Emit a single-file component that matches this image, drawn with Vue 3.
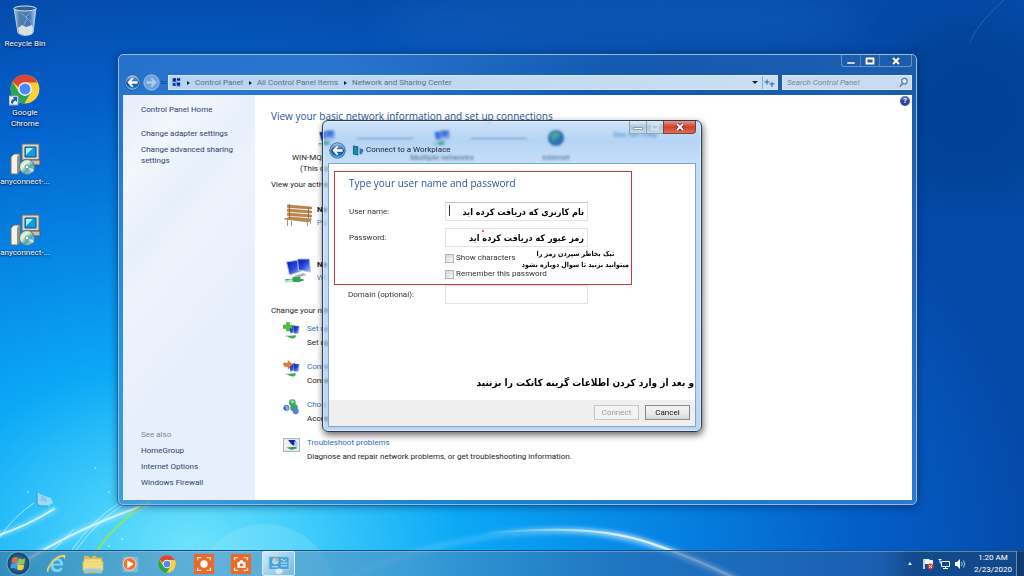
<script setup>
import { ref } from 'vue'

const userName = ref('نام کاربری که دریافت کرده اید')
const password = ref('رمز عبور که دریافت کرده اید')
const domain = ref('')
const showCharacters = ref(false)
const remember = ref(false)

const crumbs = ['Control Panel', 'All Control Panel Items', 'Network and Sharing Center']
const seeAlso = ['HomeGroup', 'Internet Options', 'Windows Firewall']
const tasks = [
  { icon: 'add', title: 'Set up', text: 'Set up' },
  { icon: 'go', title: 'Conne', text: 'Conne' },
  { icon: 'group', title: 'Choo', text: 'Acces' },
  { icon: 'fix', title: 'Troubleshoot problems', text: 'Diagnose and repair network problems, or get troubleshooting information.' },
]
</script>

<template>
  <div class="desktop">
    <svg class="wallpaper" viewBox="0 0 1024 576" preserveAspectRatio="none" aria-hidden="true">
      <defs>
        <radialGradient id="sky" gradientUnits="userSpaceOnUse" cx="0" cy="0" r="1" gradientTransform="translate(190 545) scale(850 570)">
          <stop offset="0" stop-color="#6fe2fc" />
          <stop offset=".14" stop-color="#40ccfb" />
          <stop offset=".32" stop-color="#0ba8f6" />
          <stop offset=".55" stop-color="#0584e4" />
          <stop offset=".78" stop-color="#045fca" />
          <stop offset="1" stop-color="#0549a8" />
        </radialGradient>
        <linearGradient id="fade" gradientUnits="userSpaceOnUse" x1="480" y1="0" x2="620" y2="0"><stop stop-color="#e2f4ff" stop-opacity="0" /><stop offset="1" stop-color="#e8f6ff" /></linearGradient>
        <filter id="soft"><feGaussianBlur stdDeviation="2.2" /></filter>
        <filter id="haze"><feGaussianBlur stdDeviation="18" /></filter>
      </defs>
      <rect width="1024" height="576" fill="url(#sky)" />
      <ellipse cx="620" cy="20" rx="240" ry="36" fill="#2477d0" opacity=".25" filter="url(#haze)" />
      <ellipse cx="970" cy="110" rx="90" ry="90" fill="#063c86" opacity=".5" filter="url(#haze)" />
      <circle cx="265" cy="594" r="70" fill="#b9f2ff" opacity=".18" />
      <path d="M350 576Q470 525 590 533Q650 540 740 582" fill="none" stroke="#7cd4ff" stroke-width="6" opacity=".3" filter="url(#soft)" />
      <path d="M480 534Q590 522 650 543Q700 560 738 580" fill="none" stroke="url(#fade)" stroke-width="5" opacity=".7" filter="url(#soft)" />
      <path d="M480 534Q590 522 650 543Q700 560 738 580" fill="none" stroke="url(#fade)" stroke-width="2" opacity=".9" />
      <g fill="none" stroke="#effcff" stroke-linecap="round">
        <path d="M-4 536Q25 527 54 509" stroke-width="5" opacity=".4" filter="url(#soft)" />
        <path d="M-4 536Q25 527 54 509M30 558Q80 527 148 504" stroke-width="2" opacity=".75" />
        <path d="M30 558Q80 527 148 504" stroke-width="6" opacity=".35" filter="url(#soft)" />
        <path d="M0 537Q14 516 34 503M72 550Q92 520 118 504M76 550Q98 520 124 504M52 551Q64 540 74 529" stroke-width="1" opacity=".6" />
        <path d="M970 42Q980 20 1004 0" stroke-width="1" opacity=".15" />
      </g>
      <path d="M95 554Q112 526 147 503" fill="none" stroke="#8be66a" stroke-width="2" />
      <g fill="#fff" opacity=".5"><circle cx="95" cy="468" r="1" /><circle cx="109" cy="492" r="1" /><circle cx="109" cy="546" r="1" /><circle cx="28" cy="492" r="1" /><circle cx="122" cy="539" r="1" /></g>
      <g transform="translate(36 492)">
        <path d="M1 0V11Q1 14 5 14H12L17 11L15 6L6 3z" fill="#d7f0fb" opacity=".6" />
        <path d="M5 4l5 1 1 5-6-1z" fill="#8ac6e8" /><path d="M1 0V11Q1 14 5 14H12" fill="none" stroke="#4790c4" />
      </g>
    </svg>

    <svg class="defs" width="0" height="0" aria-hidden="true">
      <defs>
        <linearGradient id="orb" x2="0" y2="1"><stop stop-color="#9fc3e8" /><stop offset=".45" stop-color="#2b64b4" /><stop offset=".5" stop-color="#103c8c" /><stop offset="1" stop-color="#2fa3e4" /></linearGradient>
        <linearGradient id="screen" x2="1" y2="1"><stop stop-color="#0716a8" /><stop offset=".5" stop-color="#2747d9" /><stop offset="1" stop-color="#a8c8f4" /></linearGradient>
        <linearGradient id="bin" x2="1"><stop stop-color="#a8c7df" /><stop offset=".25" stop-color="#547fac" /><stop offset=".7" stop-color="#4376b2" /><stop offset="1" stop-color="#b4d4ec" /></linearGradient>
        <radialGradient id="start"><stop stop-color="#6cc6ee" /><stop offset=".6" stop-color="#205d93" /><stop offset="1" stop-color="#174166" /></radialGradient>
        <linearGradient id="disc" x2="1" y2="1"><stop stop-color="#6ddbe8" /><stop offset=".35" stop-color="#edf5cc" /><stop offset=".6" stop-color="#4aa9c0" /><stop offset="1" stop-color="#dde8ea" /></linearGradient>
        <symbol id="chrome" viewBox="0 0 48 48">
          <circle cx="24" cy="24" r="23" fill="#fdd03b" />
          <path d="M4 12.500A23 23 0 0 0 23 47L33.500 29.500L24 24L14.500 29.500z" fill="#2fa255" />
          <path d="M4 12.500A23 23 0 0 1 44 13.500H24Q17 14 14 21z" fill="#dc4437" />
          <circle cx="24" cy="24" r="11" fill="#f5f8fc" /><circle cx="24" cy="24" r="8.800" fill="#4a8af4" />
        </symbol>
        <symbol id="back" viewBox="0 0 20 20">
          <circle cx="10" cy="10" r="9" fill="url(#orb)" stroke="#23508d" /><circle cx="10" cy="10" r="8" fill="none" stroke="#b6d5ef" stroke-opacity=".7" />
          <path d="M4 10l5.500-5.500 1.500 1.500-2.500 2.500H16v3H8.500L11 14l-1.500 1.500z" fill="#fff" />
        </symbol>
        <symbol id="setup" viewBox="0 0 32 32">
          <path d="M13 1H30V17H13z" fill="#d9d5ca" stroke="#6c6b68" /><path d="M16 4H27V14H16z" fill="#1399dc" stroke="#07528d" /><path d="M17 5h7l-7 7z" fill="#9ef1f8" />
          <path d="M15 17H31V22H13z" fill="#c5c1b4" stroke="#58564f" />
          <path d="M2 14L5 11H11L9 14V31H2z" fill="#f5f2e8" stroke="#727064" /><path d="M8 14L11 11V28L8 31z" fill="#94918a" />
          <circle cx="18" cy="24" r="7.500" fill="url(#disc)" stroke="#57777d" /><path d="M17 17l2 7 6 3-1 2-6-4-6-1 1-3 5 2z" fill="#f6f4cf" opacity=".8" /><circle cx="18" cy="24" r="2" fill="#eefbfe" stroke="#638896" />
        </symbol>
        <symbol id="pcs" viewBox="0 0 28 26">
          <path d="M2 4L14 2L17 13L5 17z" fill="url(#screen)" stroke="#aebde5" /><path d="M13 1L25 1L26 14L14 12z" fill="url(#screen)" stroke="#b9c7e7" />
          <path d="M9 18l10-3 3 2-10 3z" fill="#a7b6c6" /><path d="M1 21h18v2H1zM8 19h8v5H8z" fill="#29a85b" /><path d="M0 23l7-2 2 3-8 1z" fill="#c2e8c8" />
        </symbol>
      </defs>
    </svg>

    <ul class="shortcuts">
      <li>
        <svg viewBox="0 0 32 32"><path d="M5 3H27L24 28Q16 33 9 28z" fill="url(#bin)" stroke="#aecde8" /><ellipse cx="16" cy="3.500" rx="11" ry="2.500" fill="#315e91" stroke="#d5e8f7" /><path d="M9 23l4-3 4 2 6-2 1 3-1 6Q16 32 10 28z" fill="#e9ebe5" opacity=".9" /><path d="M12 8l6 5-3 7M21 8l-4 4 5 5" stroke="#94bae5" fill="none" opacity=".7" /></svg>
        <span>Recycle Bin</span>
      </li>
      <li class="chrome">
        <svg viewBox="0 0 32 32"><use href="#chrome" x="1" y="0" width="30" height="30" /><path d="M0 22H9V31H0z" fill="#edf4fb" stroke="#85a7cb" /><path d="M2 29Q2 25 5 25L4 23H8V28L6.500 26.500Q4 27 4 30z" fill="#2159a6" /></svg>
        <span>Google<br>Chrome</span>
      </li>
      <li class="installer"><svg viewBox="0 0 32 32"><use href="#setup" /></svg><span>anyconnect-...</span></li>
      <li><svg viewBox="0 0 32 32"><use href="#setup" /></svg><span>anyconnect-...</span></li>
    </ul>

    <section class="window" aria-label="Network and Sharing Center">
      <div class="controls">
        <button aria-label="Minimize"><svg viewBox="0 0 12 10"><path d="M2 6H10V8H2z" fill="#fff" stroke="#33516e" stroke-width=".5" /></svg></button>
        <button aria-label="Maximize"><svg viewBox="0 0 12 10"><path d="M2.500 2.500H9.500V7.500H2.500z" fill="none" stroke="#33516e" stroke-width="3" /><path d="M2.500 2.500H9.500V7.500H2.500z" fill="none" stroke="#fff" stroke-width="1.800" /></svg></button>
        <button class="wide" aria-label="Close"><svg viewBox="0 0 12 10"><path d="M3 2L9 8M9 2L3 8" stroke="#33516e" stroke-width="3.400" /><path d="M3 2L9 8M9 2L3 8" stroke="#fff" stroke-width="2" /></svg></button>
      </div>
      <div class="navbar">
        <button class="orb" aria-label="Back"><svg viewBox="0 0 20 20"><use href="#back" /></svg></button>
        <button class="orb dim" aria-label="Forward"><svg viewBox="0 0 20 20"><circle cx="10" cy="10" r="9" fill="#6da2d8" stroke="#a9caea" /><path d="M16 10l-5.500-5.500L9 6l2.500 2.500H4v3h7.500L9 14l1.500 1.500z" fill="#c4dcf3" opacity=".75" /></svg></button>
        <span class="history"></span>
        <nav class="address" aria-label="Address">
          <svg class="place" viewBox="0 0 12 12"><path d="M2 1h4v4H2zM7 1h4v3H7zM2 7h4v3H2zM7 6h4v4H7z" fill="#151c9e" /><path d="M1 5h4v1H1zM7 10h4v1H7zM5 4h2v5H5z" fill="#489be2" /></svg>
          <template v-for="crumb in crumbs" :key="crumb"><i class="chevron"></i><a href="#">{{ crumb }}</a></template>
          <i class="drop"></i>
          <button class="refresh" aria-label="Refresh"><svg viewBox="0 0 12 12"><path d="M1 5H6M3.500 2.500V7.500M6 7H11M8.500 5V10" stroke="#2c649f" fill="none" /></svg></button>
        </nav>
        <label class="search">
          <input type="text" placeholder="Search Control Panel" aria-label="Search Control Panel">
          <svg viewBox="0 0 12 12"><circle cx="7" cy="4.500" r="3" fill="#e4f3ff" stroke="#437aac" stroke-width="1.300" /><path d="M5 7L2 10.500" stroke="#437aac" stroke-width="1.600" /></svg>
        </label>
      </div>
      <div class="client">
        <aside>
          <a href="#" class="home">Control Panel Home</a>
          <a href="#">Change adapter settings</a>
          <a href="#">Change advanced sharing settings</a>
          <div class="also">
            <span>See also</span>
            <a v-for="item in seeAlso" :key="item" href="#">{{ item }}</a>
          </div>
        </aside>
        <main>
          <button class="help" aria-label="Help">?</button>
          <h1>View your basic network information and set up connections</h1>
          <div class="map">
            <div class="node pc"><svg viewBox="0 0 28 26"><use href="#pcs" /></svg><span>WIN-MQ</span><span>(This co</span></div>
            <i></i>
            <div class="node"><svg viewBox="0 0 28 26"><use href="#pcs" /></svg><span>Multiple networks</span></div>
            <i></i>
            <div class="node"><svg viewBox="0 0 20 20"><circle cx="10" cy="10" r="9" fill="#004a80" /><path d="M4 5l6-2 5 3-3 4-3 1v4l-5-5z" fill="#2b9767" /></svg><span>Internet</span></div>
            <a href="#">See full map</a>
          </div>
          <p class="active">View your active</p>
          <div class="network">
            <svg viewBox="0 0 30 26"><g fill="#c98945" stroke="#8b5a24" stroke-width=".5"><path d="M4 2l24 2v2L4 4.500zM4 6l24 2v2L4 8.500zM4 10l24 2v2L4 12.500z" /><path d="M1 16l6-2 21 2-3 3z" /></g><path d="M4 17v6M8 18v5M24 18v5M27 15v6" stroke="#8e979e" /><path d="M6 1v14M25 4v11" stroke="#9b6a34" /></svg>
            <div><b>Ne</b><a href="#">Pu</a></div>
          </div>
          <div class="network second">
            <svg viewBox="0 0 28 26"><use href="#pcs" /></svg>
            <div><b>Ne</b><a href="#">Wi</a></div>
          </div>
          <p class="change">Change your net</p>
          <ul class="tasks">
            <li v-for="task in tasks" :key="task.icon">
              <svg viewBox="0 0 20 20">
                <template v-if="task.icon === 'group'">
                  <circle cx="11" cy="5" r="4" fill="#42a868" /><circle cx="4" cy="11" r="3.500" fill="#365ec1" /><circle cx="13" cy="11" r="4.500" fill="#39a564" /><circle cx="15" cy="15" r="3.500" fill="#587ed0" /><path d="M2 9Q5 7 7 11L5 16Z" fill="#83aced" /><path d="M9 3q3-2 4 1l-2 2z" fill="#afe5b9" />
                </template>
                <template v-else-if="task.icon === 'fix'">
                  <path d="M.5 2.500h19v15H.5z" fill="#edf0f3" stroke="#949da6" /><path d="M6 4h8l2 3-4 4-3-3z" fill="#1420b4" /><path d="M4 13l12-1v2l-6 2z" fill="#29a54f" /><path d="M13 6h4v6h-3z" fill="#b4cae2" />
                </template>
                <template v-else>
                  <path d="M7 5l7-2 1 8-6 2z" fill="url(#screen)" /><path d="M12 4h7l-1 9h-5z" fill="url(#screen)" stroke="#a8bce6" stroke-width=".5" />
                  <path d="M3 16l12-1v2l-3 2-4-1z" fill="#35ac5d" /><path d="M2 16l4-1v2z" fill="#a6dcb6" />
                  <path v-if="task.icon === 'add'" d="M4 0h4v3h3v4H8v3H4V7H0V3h4z" fill="#4ec43b" stroke="#2b8b2b" stroke-width=".5" />
                  <path v-else d="M0 3h6V0l5 5-5 5V7H2z" fill="#ee7b2d" stroke="#af5927" stroke-width=".5" />
                </template>
              </svg>
              <div><a href="#">{{ task.title }}</a><p>{{ task.text }}</p></div>
            </li>
          </ul>
        </main>
      </div>
    </section>

    <section class="dialog" role="dialog" aria-label="Connect to a Workplace">
      <header>
        <div class="buttons">
          <button disabled aria-label="Minimize"><svg viewBox="0 0 12 10"><path d="M1.500 5.500h9v2h-9z" fill="#fff" stroke="#6f8395" stroke-width=".7" /></svg></button>
          <button disabled aria-label="Maximize"><svg viewBox="0 0 12 10"><path d="M3 2.500h6v5H3z" fill="none" stroke="#dce8f3" stroke-width="1.500" /></svg></button>
          <button class="close" aria-label="Close"><svg viewBox="0 0 12 10"><path d="M3 2L9 8M9 2L3 8" stroke="#5e282b" stroke-width="3.400" /><path d="M3 2L9 8M9 2L3 8" stroke="#fff" stroke-width="2" /></svg></button>
        </div>
        <div class="title">
          <button class="orb" aria-label="Back"><svg viewBox="0 0 20 20"><use href="#back" /></svg></button>
          <svg class="work" viewBox="0 0 12 12"><path d="M1 1l5 1v9l-5-1z" fill="#198da3" stroke="#0d667c" /><path d="M6 3h3v7H6z" fill="#83c6d9" /><path d="M8 4h3l1 2-2 4H8z" fill="#4074b0" /></svg>
          <h2>Connect to a Workplace</h2>
        </div>
      </header>
      <form class="panel" @submit.prevent>
        <div class="marked">
          <h3>Type your user name and password</h3>
          <div class="row user">
            <label for="user">User name:</label>
            <span class="box"><input id="user" v-model="userName" dir="rtl" type="text"><i class="caret"></i></span>
          </div>
          <div class="row">
            <label for="pass">Password:</label>
            <span class="box"><input id="pass" v-model="password" dir="rtl" type="text"><i class="dot"></i></span>
          </div>
          <div class="checks">
            <label><input v-model="showCharacters" type="checkbox">Show characters</label>
            <label><input v-model="remember" type="checkbox">Remember this password</label>
            <p class="note" dir="rtl" lang="fa">تیک بخاطر سپردن رمز را<br>میتوانید بزنید تا سوال دوباره نشود</p>
          </div>
        </div>
        <div class="row domain">
          <label for="domain">Domain (optional):</label>
          <span class="box"><input id="domain" v-model="domain" type="text"></span>
        </div>
        <p class="hint" dir="rtl" lang="fa">و بعد از وارد کردن اطلاعات گزینه کانکت را بزننید</p>
        <footer>
          <button type="submit" disabled>Connect</button>
          <button type="button">Cancel</button>
        </footer>
      </form>
    </section>

    <div class="taskbar">
      <button class="start" aria-label="Start"><svg viewBox="0 0 24 24"><circle cx="12" cy="12" r="11" fill="url(#start)" stroke="#8bbdda" stroke-opacity=".7" /><path d="M6 7q3-2 5.500-.500l-1 5q-3-1.500-5.500 0z" fill="#ee6a35" /><path d="M12.500 7q3 2 6 0l-1 5q-3 2-6 0z" fill="#96c947" /><path d="M5 12.500q3-1.500 5.500 0l-1 4.500q-2.500-1.500-5.500 0z" fill="#42a3e3" /><path d="M11.500 13q3 1.500 6 0l-1 4.500q-3 2-6 0z" fill="#f5cf3e" /></svg></button>
      <button aria-label="Internet Explorer"><svg viewBox="0 0 24 24"><path d="M20 14H9.500q.5 3.500 3.800 3.500 2.200 0 3.200-1.500h3.200q-1.500 5-6.500 5-7.200 0-7.200-7.500Q6 5.500 13 5.500q7.500 0 7 8.500zM9.500 11.500H16.500Q16 8.500 13 8.500t-3.500 3z" fill="#7ad8fb" stroke="#3c9edb" stroke-width=".6" /><path d="M4.500 22Q-1 20 6 11T20 2q4-1 1 5 0-4-4-2.500Q10 7 6 14t-1.500 8z" fill="#f6d44e" /></svg></button>
      <button aria-label="Explorer"><svg viewBox="0 0 24 24"><path d="M2 3h5l1 2h3V3h4l1 2h6v17H2z" fill="#d8ba55" /><path d="M3 7h18v12H3z" fill="#f9e998" /><path d="M1 9h22v10H1z" fill="#f4dc7b" stroke="#d6b852" stroke-width=".5" /><path d="M3 22v-5h18v5h-4v-2H7v2z" fill="#91cced" /></svg></button>
      <button aria-label="Media Player"><svg viewBox="0 0 24 24"><path d="M4 4h17v17H4z" fill="#8fc1dc" opacity=".8" /><circle cx="11.500" cy="12" r="7" fill="#ee752c" stroke="#ffd7b4" /><path d="M9 8l7 4-7 5z" fill="#fff" /></svg></button>
      <button aria-label="Chrome"><svg viewBox="0 0 24 24"><use href="#chrome" x="2" y="2" width="20" height="20" /></svg></button>
      <button aria-label="Screen recorder"><svg viewBox="0 0 24 24"><path d="M1 1h22v22H1z" fill="#e96a2b" /><path d="M5 8V5h4M15 5h4v3M19 16v3h-4M9 19H5v-3" stroke="#ffe0ca" stroke-width="1.500" fill="none" /><circle cx="12" cy="12" r="4" fill="#fff" /></svg></button>
      <button aria-label="Screenshot"><svg viewBox="0 0 24 24"><path d="M1 1h22v22H1z" fill="#e96a2b" /><path d="M5 8V5h4M15 5h4v3M19 16v3h-4M9 19H5v-3" stroke="#ffe0ca" stroke-width="1.500" fill="none" /><path d="M8 10h2l1-2h3l1 2h2v6H8z" fill="#fff" /><circle cx="12.500" cy="13" r="1.800" fill="#e96a2b" /></svg></button>
      <button class="running" aria-label="Control Panel"><svg viewBox="0 0 24 24"><path d="M1 4h22v14H1z" fill="#44a2d8" stroke="#a4d5ef" /><circle cx="8" cy="9" r="3.500" fill="#a8dcf6" /><path d="M8 9V5a4 4 0 0 1 4 4z" fill="#e8a566" /><path d="M14 7h2l1 2 3-2M14 11h7M14 14h7M4 15h7" stroke="#d6f2ff" fill="none" /><ellipse cx="12" cy="20" rx="4" ry="3" fill="#dce8ed" /></svg></button>
      <div class="tray">
        <i class="up"></i>
        <svg viewBox="0 0 12 12"><path d="M2 1v10" stroke="#fff" stroke-width="1.500" /><path d="M3 1h4l1 1h3v5H7L6 6H3z" fill="#eef3f7" /><circle cx="8.500" cy="8.500" r="3" fill="#dd3d31" /><path d="M7 7l3 3M10 7l-3 3" stroke="#fff" /></svg>
        <svg viewBox="0 0 12 12"><path d="M3.500 3.500h8v5h-8zM5 10.500h5M7.500 8v3M2 1v4h2M.5 1.500h3" stroke="#edf4fa" fill="none" /></svg>
        <svg viewBox="0 0 12 12"><path d="M1 4h2l3-3v10L3 8H1z" fill="#fff" /><path d="M7.500 4q1.500 2 0 4M9.500 2.500q2.500 3.500 0 7" stroke="#d7e6f3" fill="none" stroke-width=".8" /></svg>
        <time>1:20 AM<br>2/23/2020</time>
        <i class="peek"></i>
      </div>
    </div>
  </div>
</template>

<style>
html, body, #app { height: 100%; }
body { margin: 0; overflow: hidden; }
</style>

<style scoped>
* { box-sizing: border-box; }
.desktop { position: relative; height: 100%; overflow: hidden; display: flex; flex-direction: column; justify-content: space-between; font: 8px/12px Roboto, "Open Sans", sans-serif; color: #1c1c1c; }
.wallpaper { position: absolute; inset: 0; width: 100%; height: 100%; }
.defs { position: absolute; }
svg { display: block; flex: none; }
h1, h2, h3, p, ul { margin: 0; padding: 0; font-weight: 400; }
ul { list-style: none; }
a { text-decoration: none; color: #2a71bd; }
button { font: inherit; padding: 0; margin: 0; border: 0; background: none; color: inherit; }
input { font: inherit; padding: 0; margin: 0; }

.shortcuts { position: relative; width: 50px; padding-top: 4px; display: flex; flex-direction: column; gap: 24px; color: #fff; text-shadow: 0 1px 2px #001c46, 0 0 2px #001c46; }
.shortcuts li { display: flex; flex-direction: column; align-items: center; line-height: 11px; text-align: center; }
.shortcuts svg { width: 32px; height: 34px; }
.shortcuts .chrome { margin-bottom: -11px; }
.shortcuts .installer { margin-bottom: 2px; }
.shortcuts span { white-space: nowrap; }

.window { position: absolute; left: 118px; right: 107px; top: 54px; bottom: 71px; display: flex; flex-direction: column; padding: 0 4px 4px; border: 1px solid #8fbce6; border-radius: 5px; outline: 1px solid #17508a90; background: linear-gradient(125deg, #3b82d499 0, #4389d699 20%, #1c62b399 45%, #2f6fb599 75%, #4f97dd88); box-shadow: 0 1px 8px #001c4299; }
.controls { align-self: flex-end; display: flex; height: 12px; border: 1px solid #6793c2; border-top: 0; border-radius: 0 0 3px 3px; }
.controls button { width: 19px; display: grid; place-items: center; border-right: 1px solid #5584b8; }
.controls .wide { width: 31px; border: 0; }
.controls svg { width: 12px; height: 10px; }
.navbar { display: flex; align-items: center; height: 28px; padding-top: 3px; }
.orb { width: 17px; height: 17px; margin-left: 1px; }
.orb svg { width: 17px; height: 17px; }
.dim { margin-left: 2px; }
.history { width: 5px; height: 3px; margin: 0 2px 0 1px; border: 1px solid #1c559a; }
.address, .search { height: 15px; display: flex; align-items: center; background: #c5daf1; border: 1px solid #d9e9f7; }
.address { flex: 1; padding-left: 2px; background: linear-gradient(90deg, #b6d4f3, #cbdef2); }
.address a { color: #5d6f84; white-space: nowrap; }
.place { width: 10px; height: 11px; }
.chevron { margin: 0 5px 0 6px; border: 2px solid transparent; border-left: 3px solid #10223a; border-right: 0; }
.drop { margin-left: auto; margin-right: 4px; border: 3px solid transparent; border-top-color: #10223a; border-bottom: 0; }
.refresh { width: 15px; height: 13px; border-left: 1px solid #88acd1; }
.refresh svg { width: 13px; height: 12px; }
.search { width: 130px; margin-left: 4px; padding: 0 2px 0 4px; background: #c9dbf0; }
.search input { min-width: 0; flex: 1; border: 0; outline: 0; background: none; }
.search input::placeholder { color: #7b8795; opacity: 1; font-style: italic; }
.search svg { width: 11px; height: 11px; }
.client { flex: 1; min-height: 0; display: flex; background: #fff; }
aside { width: 132px; display: flex; flex-direction: column; padding: 9px 16px 12px 18px; background: linear-gradient(130deg, #e4ecf8 0, #f3f7fd 15%, #e7effa 30%, #eef3fc 38%, #e8effc 60%); color: #808894; line-height: 11px; }
aside a { color: #2e4369; margin-bottom: 5px; }
aside .home { margin-bottom: 13px; }
.also { margin-top: auto; display: flex; flex-direction: column; gap: 5px; }
.also a { margin: 0; }
main { position: relative; flex: 1; padding: 13px 16px 0; }
.help { position: absolute; right: 2px; top: 1px; width: 10px; height: 10px; border-radius: 50%; background: #2b449e; color: #fff; font-weight: 700; line-height: 10px; box-shadow: inset 0 1px 2px #8da4e2; }
h1, h3 { font: 400 10px/16px "Open Sans", sans-serif; color: #28579b; white-space: nowrap; }
.map { display: flex; height: 51px; padding-top: 5px; }
.node { width: 58px; display: flex; flex-direction: column; align-items: center; line-height: 11px; white-space: nowrap; }
.node svg { width: 18px; height: 18px; margin-bottom: 5px; }
.node.pc { width: 65px; margin-left: 21px; align-items: flex-start; }
.pc svg { margin-left: 26px; }
.pc span:last-child { margin-left: 8px; }
.map i { width: 56px; height: 1px; margin-top: 9px; background: #5e7d9f; }
.map > a { margin-left: 28px; }
.active { padding-top: 4px; }
.network { display: flex; align-items: flex-start; gap: 3px; margin: 12px 0 0 12px; height: 43px; line-height: 13px; }
.network svg { width: 31px; height: 26px; }
.network div { display: flex; flex-direction: column; }
.network a { opacity: .8; }
.change { margin-top: 4px; }
.tasks { margin: 5px 0 0 12px; display: flex; flex-direction: column; gap: 10px; }
.tasks li { display: flex; gap: 7px; line-height: 14px; }
.tasks svg { width: 17px; height: 18px; }

.dialog { position: absolute; left: 0; right: 0; top: 120px; margin: 0 auto; width: 380px; display: flex; flex-direction: column; padding: 0 5px 4px; border: 1px solid #2d3d4d; border-radius: 6px; background: linear-gradient(180deg, #94c1f077 0, #60a2e877 20px, #84baf277 42px, #6ca8e077); box-shadow: inset 0 0 0 1px #e6f3ffb0, 1px 3px 7px #0009; backdrop-filter: blur(1px); }
header { height: 42px; }
.buttons { height: 13px; display: flex; justify-content: flex-end; }
.buttons button { width: 18px; display: grid; place-items: center; border: 1px solid #8da4ba; border-top: 0; background: linear-gradient(#e2edf7, #aec5db 50%, #c3d9ec); margin-left: -1px; }
.buttons svg { width: 12px; height: 10px; }
.buttons .close { width: 33px; border-color: #75423c; border-radius: 0 0 4px 0; background: linear-gradient(#e79689, #d1412d 50%, #df6c53); }
.title { display: flex; align-items: center; height: 29px; padding-top: 3px; }
.title .orb { width: 18px; }
.work { width: 12px; height: 11px; margin: 0 2px 0 5px; }
h2 { font-size: 8px; line-height: 12px; color: #16212c; }
.panel { display: flex; flex-direction: column; background: #fff; border: 1px solid #80a6ca; color: #333; }
.marked { margin: 7px 63px 0 5px; height: 114px; padding: 3px 0 0 14px; border: 1px solid #cb393e; }
.row { display: flex; align-items: center; }
.row label { width: 96px; }
.user { margin: 11px 0 7px; }
.box { position: relative; width: 143px; height: 19px; }
.box input { display: block; width: 100%; height: 19px; padding: 0 3px; border: 1px solid #e3e3e3; outline: 0; background: #fff; font: 700 9px/17px "DejaVu Sans Condensed", "DejaVu Sans", sans-serif; color: #000; }
.user .box input { border-top-color: #c3c3c3; }
.caret { position: absolute; left: 4px; top: 3px; width: 1px; height: 11px; background: #333; }
.dot { position: absolute; left: 37px; top: 2px; width: 2px; height: 2px; border-radius: 50%; background: #df3038; }
.checks { position: relative; display: flex; flex-direction: column; align-items: flex-start; gap: 4px; margin: 5px 0 0 96px; }
.checks label { display: flex; align-items: center; gap: 2px; white-space: nowrap; }
.checks input { appearance: none; width: 9px; height: 9px; border: 1px solid #b5b5b5; background: linear-gradient(135deg, #d5d5d5, #f7f7f7); }
.note { position: absolute; right: 2px; top: -3px; white-space: nowrap; text-align: center; font: 700 7px/11px "DejaVu Sans Condensed", "DejaVu Sans", sans-serif; color: #000; }
.domain { padding-left: 19px; }
.domain label { width: 97px; }
.hint { margin-top: 70px; padding-right: 1px; font: 700 10px/18px "DejaVu Sans Condensed", "DejaVu Sans", sans-serif; color: #000; white-space: nowrap; }
footer { display: flex; justify-content: flex-end; gap: 6px; margin-top: 8px; padding: 5px 5px 6px; background: #efefef; }
footer button { width: 45px; height: 15px; border: 1px solid #898989; background: linear-gradient(#f3f3f3, #ececec 50%, #d7d7d7); color: #111; }
footer button:disabled { border-color: #c6c6c6; background: #f3f3f3; color: #9b9b9b; }

.taskbar { position: relative; height: 26px; display: flex; align-items: center; border-top: 1px solid #164e7d; background: linear-gradient(90deg, #37719999 0, #5a9ac8aa 20%, #4f8fc199 40%, #2f68a999 60%, #2a60a399 86%, #1d416c99 89%, #1846739c); box-shadow: inset 0 1px #9cd3ee70; }
.taskbar button { width: 37px; height: 25px; display: grid; place-items: center; }
.taskbar button svg { width: 22px; height: 22px; }
.taskbar .start svg { width: 25px; height: 25px; }
.taskbar .running { width: 33px; margin-left: 3px; border: 1px solid #d4edf9; border-radius: 2px; background: linear-gradient(135deg, #edf8fdcc, #8bc1df99); }
.tray { margin-left: auto; display: flex; align-items: center; gap: 4px; color: #fff; }
.tray svg { width: 12px; height: 12px; }
.up { margin-right: 6px; border: 2px solid transparent; border-bottom: 3px solid #eef5fb; border-top: 0; }
time { margin-left: 4px; text-align: center; line-height: 12px; }
.peek { width: 8px; height: 25px; border-left: 1px solid #6b8db4; background: #123563aa; }
</style>
